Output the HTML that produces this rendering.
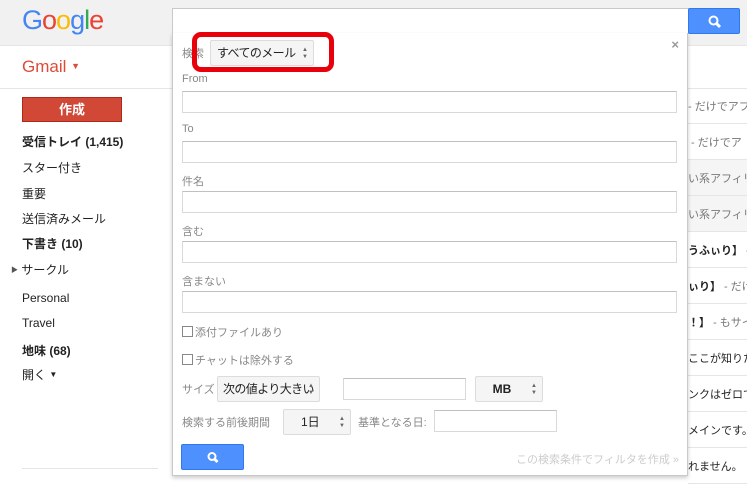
<!DOCTYPE html>
<html><head><meta charset="utf-8"><style>
*{box-sizing:border-box;margin:0;padding:0}
body{width:747px;height:476px;overflow:hidden;background:#fff;font-family:"Liberation Sans","Noto Sans CJK JP",sans-serif;position:relative;font-size:13px;color:#222}
.abs{position:absolute}
.hdr{left:0;top:0;width:747px;height:46px;background:#f1f1f1;border-bottom:1px solid #e5e5e5}
.logo{left:22px;top:5px;font-size:27px;letter-spacing:-1px;font-family:"Liberation Sans",sans-serif}
.sb{left:172px;top:8px;width:517px;height:26px;background:#fff;border:1px solid #c9c9c9}
.btn{left:688px;top:8px;width:52px;height:26px;background:#4d90fe;border:1px solid #3079ed;border-radius:2px}
.nav{left:22px;font-size:12px;color:#222}
.row{left:688px;width:59px;height:36px;border-bottom:1px solid #e5e5e5;font-size:11px;white-space:nowrap;overflow:hidden;padding-top:10px}
.g{color:#777}
.panel{left:172px;top:33px;width:516px;height:443px;background:#fff;border:1px solid #c9c9c9;border-top:none;box-shadow:0 2px 4px rgba(0,0,0,.2)}
.lbl{left:9px;font-size:11px;color:#888;white-space:nowrap}
.inp{left:9px;width:495px;height:22px;border:1px solid #d9d9d9;border-top-color:#c0c0c0;background:#fff}
.sel{background:#f5f5f5;border:1px solid #dcdcdc;border-radius:2px;font-size:12px;color:#222;height:26px;line-height:24px;white-space:nowrap;letter-spacing:-0.6px}
.arr{position:absolute;right:5px;top:0;font-size:6px;color:#666;line-height:7px;padding-top:6px;letter-spacing:0}
.cb{display:inline-block;width:11px;height:11px;border:1px solid #888;vertical-align:-1px;margin-right:2px}
</style></head><body>
<div class="abs hdr"></div>
<div class="abs logo"><span style="color:#4285f4">G</span><span style="color:#ea4335">o</span><span style="color:#fbbc05">o</span><span style="color:#4285f4">g</span><span style="color:#34a853">l</span><span style="color:#ea4335">e</span></div>
<div class="abs sb"></div>
<div class="abs btn"><svg width="52" height="26" viewBox="0 0 52 26"><circle cx="24.5" cy="11.5" r="4" fill="none" stroke="#fff" stroke-width="2"/><path d="M27.5 14.5 L31 18" stroke="#fff" stroke-width="3"/></svg></div>
<div class="abs" style="left:22px;top:57px;font-size:17px;color:#dd4b39">Gmail <span style="font-size:9px;vertical-align:3px">▼</span></div>
<div class="abs" style="left:0;top:88px;width:172px;border-top:1px solid #e5e5e5"></div>
<div class="abs" style="left:22px;top:97px;width:100px;height:25px;background:#d14836;border:1px solid #b0281a;color:#fff;font-weight:bold;text-align:center;line-height:23px;font-size:13px">作成</div>
<div class="abs nav" style="top:133px;font-weight:bold">受信トレイ (1,415)</div>
<div class="abs nav" style="top:159px">スター付き</div>
<div class="abs nav" style="top:185px">重要</div>
<div class="abs nav" style="top:210px">送信済みメール</div>
<div class="abs nav" style="top:235px;font-weight:bold">下書き (10)</div>
<div class="abs nav" style="left:11px;top:261px"><span style="font-size:7px;vertical-align:2px;color:#555">▶</span> サークル</div>
<div class="abs nav" style="top:291px">Personal</div>
<div class="abs nav" style="top:316px">Travel</div>
<div class="abs nav" style="top:342px;font-weight:bold">地味 (68)</div>
<div class="abs nav" style="top:366px">開く <span style="font-size:8px;vertical-align:2px">▼</span></div>
<div class="abs" style="left:22px;top:468px;width:136px;border-top:1px solid #e5e5e5"></div>

<div class="abs" style="left:688px;top:88px;width:59px;border-top:1px solid #e5e5e5"></div>
<div class="abs row" style="top:88px"><span class="g">- だけでアフ</span></div>
<div class="abs row" style="top:124px"><span class="g">&nbsp;- だけでア</span></div>
<div class="abs row" style="top:160px;background:#f5f5f5"><span class="g">い系アフィリ</span></div>
<div class="abs row" style="top:196px;background:#f5f5f5"><span class="g">い系アフィリ</span></div>
<div class="abs row" style="top:232px"><b>うふぃり】</b><span class="g"> - だ</span></div>
<div class="abs row" style="top:268px"><b>ぃり】</b><span class="g"> - だけ</span></div>
<div class="abs row" style="top:304px"><b>！】</b><span class="g"> - もサイ</span></div>
<div class="abs row" style="top:340px">ここが知りた</div>
<div class="abs row" style="top:376px">ンクはゼロで</div>
<div class="abs row" style="top:412px">メインです。</div>
<div class="abs row" style="top:448px">れません。</div>

<div class="abs panel">
<div class="abs" style="right:8px;top:4px;color:#999;font-size:13px;font-weight:bold">×</div>
<div class="abs lbl" style="top:12px">検索</div>
<div class="abs sel" style="left:37px;top:7px;width:104px;padding-left:6px">すべてのメール<span class="arr">▲<br>▼</span></div>
<div class="abs" style="left:19px;top:-1px;width:142px;height:40px;border:5px solid #e8000b;border-radius:9px"></div>
<div class="abs lbl" style="top:40px">From</div>
<div class="abs inp" style="top:58px"></div>
<div class="abs lbl" style="top:90px">To</div>
<div class="abs inp" style="top:108px"></div>
<div class="abs lbl" style="top:140px">件名</div>
<div class="abs inp" style="top:158px"></div>
<div class="abs lbl" style="top:190px">含む</div>
<div class="abs inp" style="top:208px"></div>
<div class="abs lbl" style="top:240px">含まない</div>
<div class="abs inp" style="top:258px"></div>
<div class="abs lbl" style="top:291px"><span class="cb"></span>添付ファイルあり</div>
<div class="abs lbl" style="top:319px"><span class="cb"></span>チャットは除外する</div>
<div class="abs lbl" style="top:348px">サイズ</div>
<div class="abs sel" style="left:44px;top:343px;width:103px;padding-left:5px">次の値より大きい<span class="arr">▲<br>▼</span></div>
<div class="abs inp" style="left:170px;top:345px;width:123px;height:22px"></div>
<div class="abs sel" style="left:302px;top:343px;width:68px;text-align:center;font-weight:bold;padding-right:14px;letter-spacing:0">MB<span class="arr">▲<br>▼</span></div>
<div class="abs lbl" style="top:381px">検索する前後期間</div>
<div class="abs sel" style="left:110px;top:376px;width:68px;padding-left:17px;letter-spacing:0">1日<span class="arr">▲<br>▼</span></div>
<div class="abs lbl" style="left:185px;top:381px">基準となる日:</div>
<div class="abs inp" style="left:261px;top:377px;width:123px;height:22px"></div>
<div class="abs" style="left:8px;top:411px;width:63px;height:26px;background:#4d90fe;border:1px solid #3079ed;border-radius:2px"><svg width="63" height="26" viewBox="0 0 63 26"><circle cx="30" cy="11.5" r="3.5" fill="none" stroke="#fff" stroke-width="2"/><path d="M32.5 14 L35.5 17" stroke="#fff" stroke-width="3"/></svg></div>
<div class="abs" style="right:8px;top:418px;font-size:11px;color:#ccc">この検索条件でフィルタを作成 »</div>
</div>
</body></html>
